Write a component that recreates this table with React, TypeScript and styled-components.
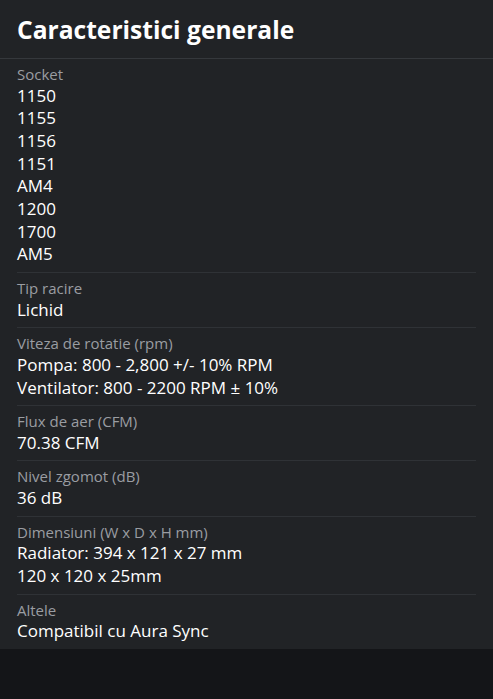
import styled, { createGlobalStyle } from "styled-components"

const GlobalStyle = createGlobalStyle`
  html, body {
    margin: 0;
    padding: 0;
    background: #141518;
  }
  body {
    font-family: "Open Sans", "Noto Sans", sans-serif;
    -webkit-font-smoothing: antialiased;
  }
`

const Panel = styled.section`
  background: #212326;
  width: 493px;
`

const Header = styled.div`
  display: flex;
  align-items: center;
  padding: 0 17px;
  border-bottom: 1px solid #35383c;
  box-sizing: border-box;
  height: 59px;
`

const Title = styled.h2`
  margin: 0;
  font-size: 24.6px;
  font-weight: 700;
  color: #ffffff;
`

const List = styled.div`
  padding: 0 17px;
`

const Spec = styled.div<{ last?: boolean }>`
  padding: 5px 0 6px;
  border-bottom: ${(p) => (p.last ? "none" : "1px solid #2f3236")};
`

const Label = styled.div`
  font-size: 15px;
  line-height: 20.5px;
  font-weight: 500;
  color: #9a9da2;
`

const Value = styled.div`
  font-size: 17px;
  line-height: 22.7px;
  font-weight: 500;
  color: #ffffff;
`

const specs: { label: string; values: string[] }[] = [
  { label: "Socket", values: ["1150", "1155", "1156", "1151", "AM4", "1200", "1700", "AM5"] },
  { label: "Tip racire", values: ["Lichid"] },
  { label: "Viteza de rotatie (rpm)", values: ["Pompa: 800 - 2,800 +/- 10% RPM", "Ventilator: 800 - 2200 RPM ± 10%"] },
  { label: "Flux de aer (CFM)", values: ["70.38 CFM"] },
  { label: "Nivel zgomot (dB)", values: ["36 dB"] },
  { label: "Dimensiuni (W x D x H mm)", values: ["Radiator: 394 x 121 x 27 mm", "120 x 120 x 25mm"] },
  { label: "Altele", values: ["Compatibil cu Aura Sync"] },
]

export default function App() {
  return (
    <>
      <GlobalStyle />
      <Panel>
        <Header>
          <Title>Caracteristici generale</Title>
        </Header>
        <List>
          {specs.map((s, i) => (
            <Spec key={s.label} last={i === specs.length - 1}>
              <Label>{s.label}</Label>
              {s.values.map((v) => (
                <Value key={v}>{v}</Value>
              ))}
            </Spec>
          ))}
        </List>
      </Panel>
    </>
  )
}
